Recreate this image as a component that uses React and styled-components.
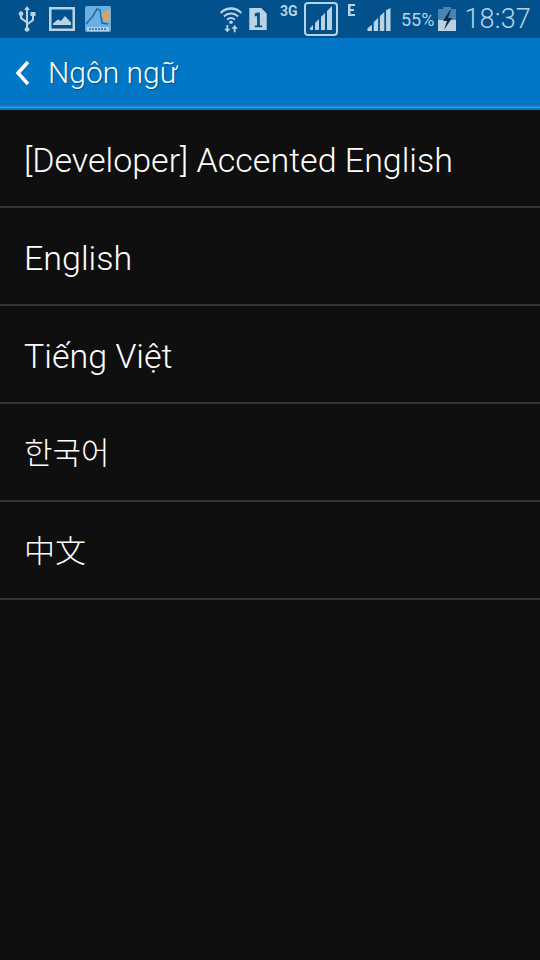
import React from "react";
import styled, { createGlobalStyle } from "styled-components";

const Global = createGlobalStyle`
  html, body { margin: 0; padding: 0; background: #0f0f0f; }
  body { font-family: Roboto, "Noto Sans CJK KR", sans-serif; }
`;
const Page = styled.div`
  width: 540px; height: 960px; background: #0f0f0f; overflow: hidden;
  display: flex; flex-direction: column;
`;
const StatusBar = styled.div`
  height: 38px; background: #02518c; display: flex; align-items: center;
  color: #b9d3e4; flex: none;
`;
const NotifIcons = styled.div`
  display: flex; align-items: center; padding-left: 17px; gap: 12px; height: 100%;
`;
const SysIcons = styled.div`
  margin-left: auto; display: flex; align-items: center; height: 100%; padding-right: 9px;
`;
const Glyph = styled.svg`
  display: block; flex: none; margin-left: ${p => p.$ml || 0}px; fill: #b9d3e4;
`;
const Percent = styled.span`
  font-size: 18px; margin-left: 10px; line-height: 38px; margin-top: 2px;
`;
const Clock = styled.span`
  font-size: 27px; margin-left: 8px; line-height: 38px; font-weight: 300; letter-spacing: 0.2px;
`;
const ActionBar = styled.div`
  height: 72px; box-sizing: border-box; background: #0277c6; border-bottom: 2px solid #0277c6;
  box-shadow: inset 0 -1.500px 0 #3f9bdc;
  display: flex; align-items: center; padding: 0 0 1px 15px; flex: none;
`;
const Title = styled.h1`
  margin: 0 0 0 18px; font-size: 30px; font-weight: 300; color: #fff; line-height: 36px;
  text-shadow: 1px 1px 1px rgba(0,0,0,.35);
`;
const List = styled.ul`
  margin: 0; padding: 0; list-style: none;
`;
const Row = styled.li`
  height: 98px; box-sizing: border-box; border-bottom: 2px solid #343434;
  display: flex; align-items: center; padding: 3px 0 0 24px;
  color: #fff; font-size: ${p => (p.$cjk ? 31 : 34)}px; font-weight: 300; line-height: 40px;
`;

const items = [
  { text: "[Developer] Accented English" },
  { text: "English" },
  { text: "Tiếng Việt" },
  { text: "한국어", cjk: true },
  { text: "中文", cjk: true },
];

export default function App() {
  return (
    <Page>
      <Global />
      <StatusBar>
        <NotifIcons>
          <Glyph width="20" height="26" viewBox="0 0 20 26">
            <path d="M10 0l3 4h-2v12.500l4-3V10h-1.500V6h5v4H17v4.500l-6 4.500v2.200a2.400 2.400 0 1 1-2 0V17L3 12.500V9.700a2.300 2.300 0 1 1 2 0v1.800l4 3V4H7z" />
          </Glyph>
          <Glyph width="26" height="24" viewBox="0 0 26 24">
            <path fillRule="evenodd" d="M0 0h26v24H0zM2.500 2.500v19h21v-19z" />
            <path d="M4 18v-1.500l5-4 3 1.500 4-5 6 6.500V18z" />
          </Glyph>
          <Glyph width="26" height="26" viewBox="0 0 26 26" style={{ marginLeft: -2 }}>
            <rect width="26" height="26" rx="2" fill="#6aaee2" />
            <path d="M1 18L8 10l4-7 3 1 2 13 6 1" fill="none" stroke="#1c6aa8" strokeWidth="1.500" />
            <path d="M16 8l9-5v13l-5 0z" fill="#d3a865" />
            <rect x="2" y="21" width="22" height="4" fill="#a8d2ee" />
            <path d="M4 23h18" stroke="#1c6aa8" strokeWidth="1.500" strokeDasharray="2 1" />
          </Glyph>
        </NotifIcons>
        <SysIcons>
          <Glyph width="22" height="27" viewBox="0 0 24 28">
            <path d="M0 6C6-1 18-1 24 6l-1.500 1.700C17 2 7 2 1.500 7.700z" />
            <path d="M3.500 10c4.500-5 12.500-5 17 0L19 11.500c-4-4-10-4-14 0z" />
            <path d="M7 13.500c3-3 7-3 10 0L15.500 15c-2-2-5-2-7 0z" />
            <circle cx="12" cy="17" r="2" />
            <path d="M7 20v4H4.500L8 28l3.500-4H9v-4zM15 28v-4h-2.500L16 20l3.500 4H17v4z" />
          </Glyph>
          <Glyph width="18" height="22" viewBox="0 0 19 24" $ml={7}>
            <path fillRule="evenodd" d="M0 0h13l6 6v18H0zM6 6v3h2.500v10H6v2h8v-2h-2.500V5H9z" />
          </Glyph>
          <Glyph width="24" height="14" viewBox="0 0 24 14" $ml={13} style={{ marginTop: -17 }}>
            <text x="0" y="12" fontSize="14" fontWeight="700" fontFamily="Roboto" fill="#b9d3e4">3G</text>
          </Glyph>
          <Glyph width="34" height="34" viewBox="0 0 34 34">
            <rect x="1" y="1" width="32" height="32" rx="3" fill="none" stroke="#b9d3e4" strokeWidth="2" />
            <path d="M6 28v-2l3-3v5zM11 28v-7l4-4v11zM17 28V15l4-4v17zM23 28V9l5-5v24z" />
          </Glyph>
          <Glyph width="10" height="14" viewBox="0 0 10 14" $ml={9} style={{ marginTop: -19 }}>
            <path d="M1 1h7v2H3.500v3H7v2H3.500v3H8v2H1z" />
          </Glyph>
          <Glyph width="24" height="23" viewBox="0 0 26 26" $ml={10} style={{ marginTop: 1 }}>
            <path d="M0 26v-3l5-4v7zM7 26V16l5-5v15zM14 26V9l5-4.500V26zM21 26V2.500L26 0v26z" />
          </Glyph>
          <Percent>55%</Percent>
          <Glyph width="18" height="24" viewBox="0 0 18 24" $ml={4} style={{ marginTop: -1 }}>
            <path d="M5 0h8v2h5v22H0V2h5z" opacity=".4" />
            <path d="M0 13h18v11H0z" />
            <path d="M12 3L5 14h4l-3 9 8-12H10l3-8z" fill="#0d2b44" />
          </Glyph>
          <Clock>18:37</Clock>
        </SysIcons>
      </StatusBar>
      <ActionBar>
        <svg width="15" height="26" viewBox="0 0 15 26" style={{ display: "block", flex: "none" }}>
          <path d="M13 2L3 13l10 11" fill="none" stroke="#fff" strokeWidth="3.500" />
        </svg>
        <Title>Ngôn ngữ</Title>
      </ActionBar>
      <List>
        {items.map(i => <Row key={i.text} $cjk={i.cjk}>{i.text}</Row>)}
      </List>
    </Page>
  );
}
